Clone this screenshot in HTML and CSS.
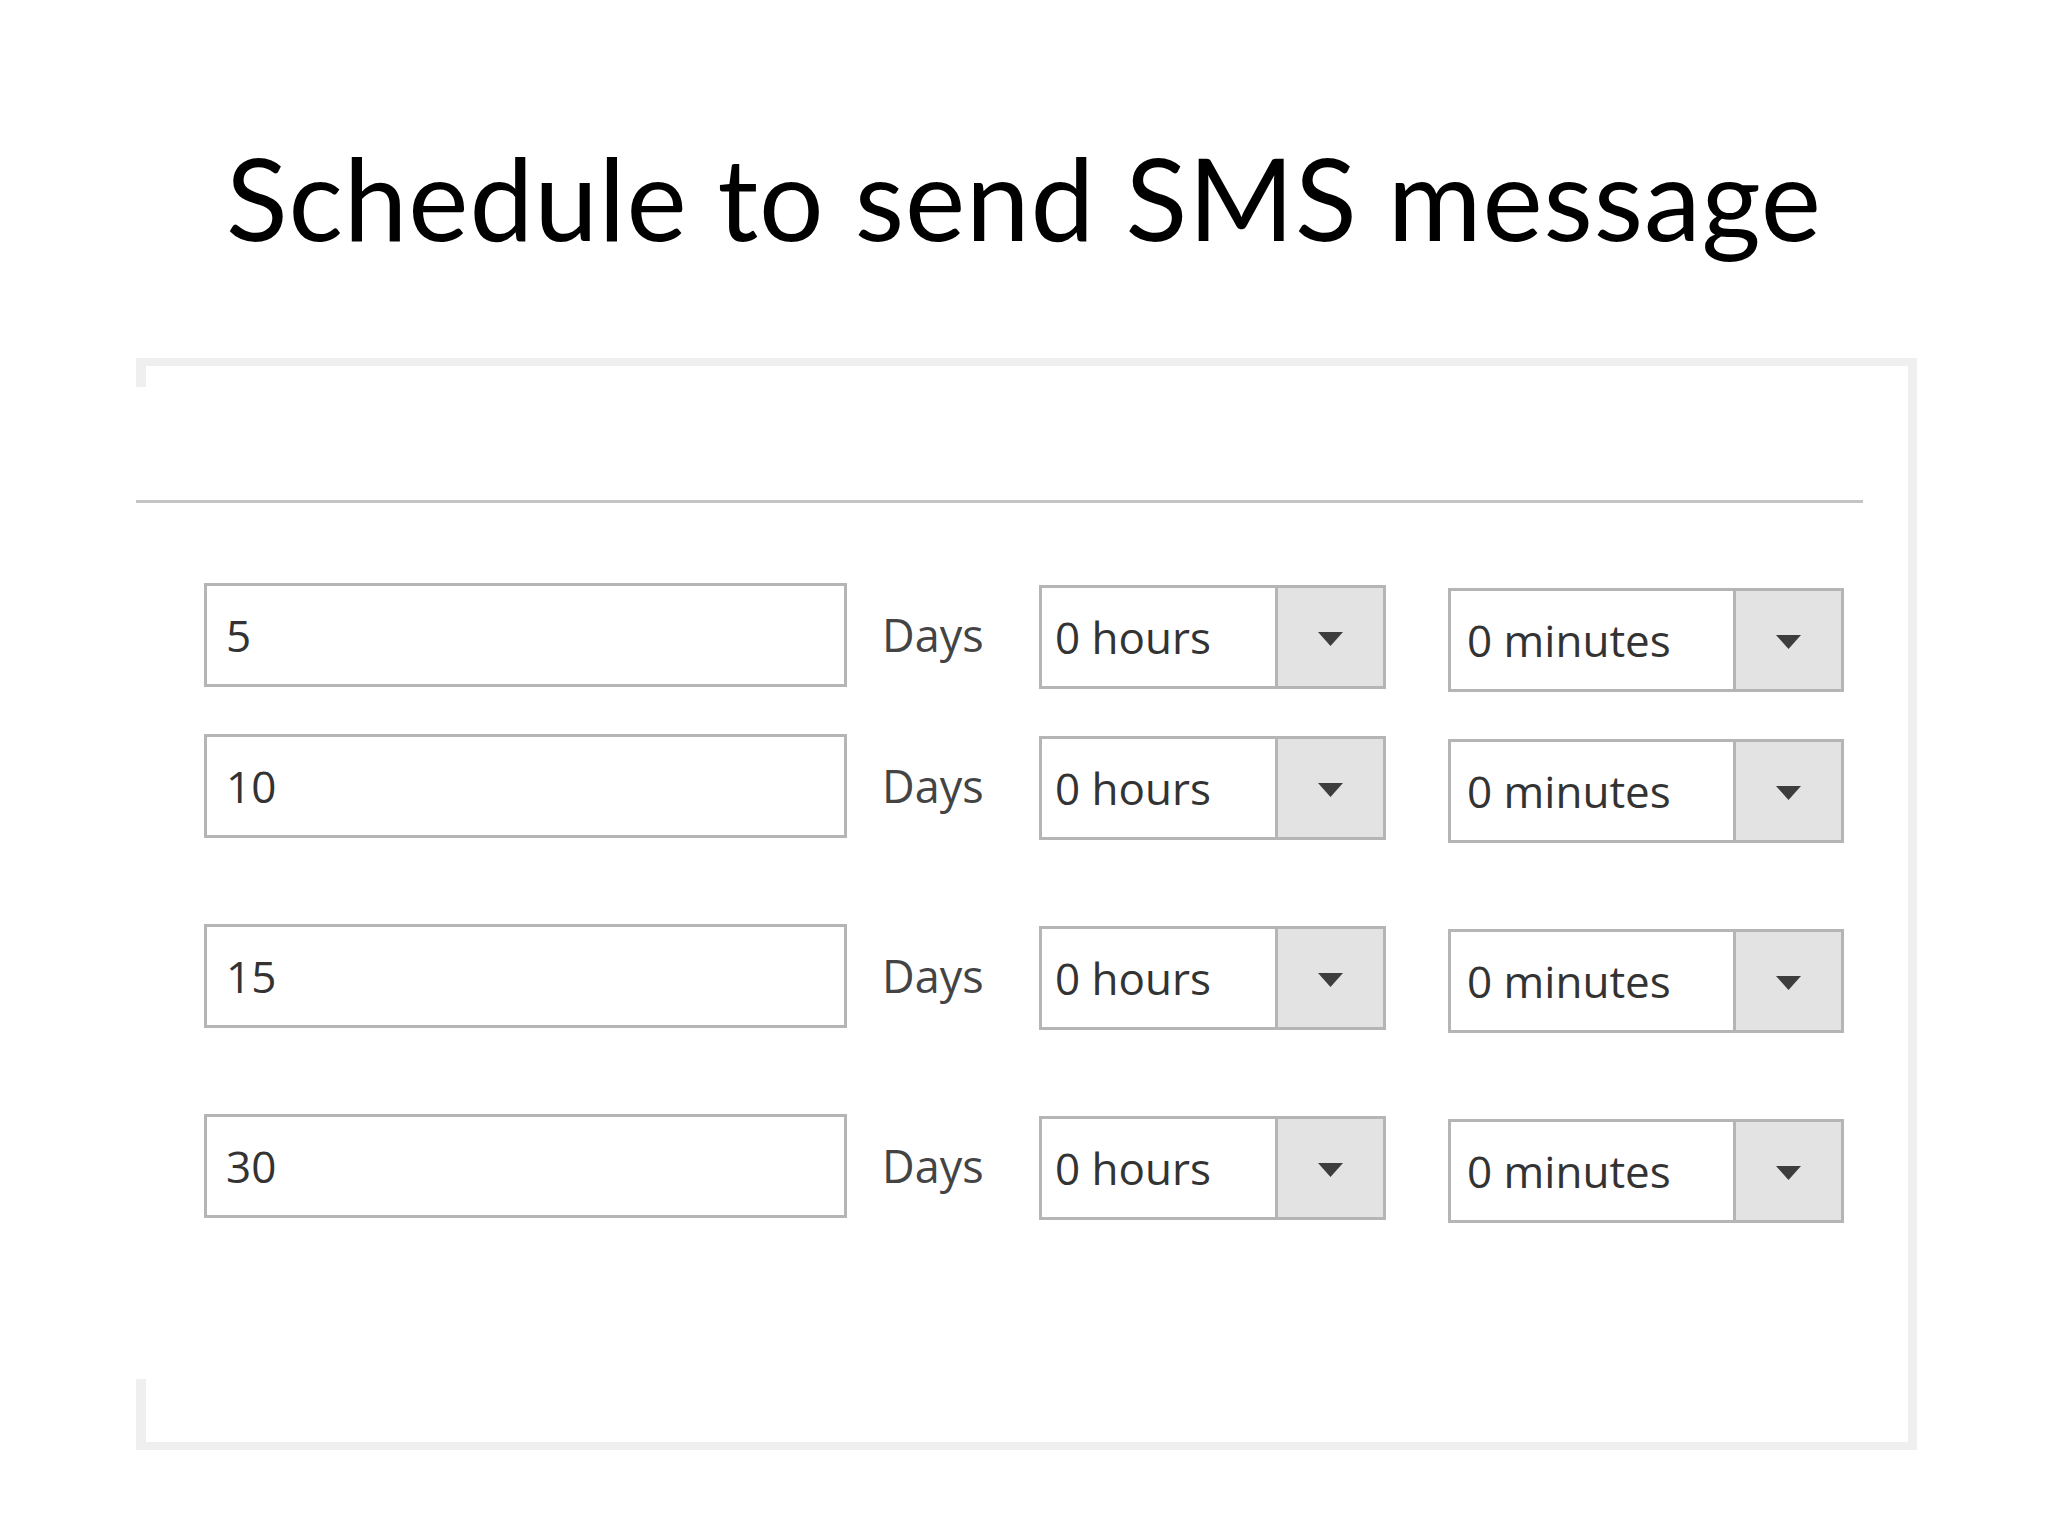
FILE: index.html
```html
<!DOCTYPE html>
<html lang="en">
<head>
  <meta charset="UTF-8">
  <meta name="viewport" content="width=device-width, initial-scale=1.0">
  <title>Schedule to send SMS message</title>
  <link rel="stylesheet" href="styles.css">
</head>
<body>
  <h1 class="title">Schedule to send SMS message</h1>

  <div class="panel">
    <div class="panel-header"></div>

    <div class="schedule">
      <!-- Reminder 1 -->
      <div class="row">
        <div class="days-input">5</div>
        <div class="days-label">Days</div>
        <div class="select select-hours">
          <span class="select-value">0 hours</span>
          <span class="select-toggle">
            <svg class="arrow" width="25" height="14" viewBox="0 0 25 14"><polygon points="0,0 25,0 12.5,14"/></svg>
          </span>
        </div>
        <div class="select select-minutes">
          <span class="select-value">0 minutes</span>
          <span class="select-toggle">
            <svg class="arrow" width="25" height="14" viewBox="0 0 25 14"><polygon points="0,0 25,0 12.5,14"/></svg>
          </span>
        </div>
      </div>

      <!-- Reminder 2 -->
      <div class="row row-tight">
        <div class="days-input">10</div>
        <div class="days-label">Days</div>
        <div class="select select-hours">
          <span class="select-value">0 hours</span>
          <span class="select-toggle">
            <svg class="arrow" width="25" height="14" viewBox="0 0 25 14"><polygon points="0,0 25,0 12.5,14"/></svg>
          </span>
        </div>
        <div class="select select-minutes">
          <span class="select-value">0 minutes</span>
          <span class="select-toggle">
            <svg class="arrow" width="25" height="14" viewBox="0 0 25 14"><polygon points="0,0 25,0 12.5,14"/></svg>
          </span>
        </div>
      </div>

      <!-- Reminder 3 -->
      <div class="row">
        <div class="days-input">15</div>
        <div class="days-label">Days</div>
        <div class="select select-hours">
          <span class="select-value">0 hours</span>
          <span class="select-toggle">
            <svg class="arrow" width="25" height="14" viewBox="0 0 25 14"><polygon points="0,0 25,0 12.5,14"/></svg>
          </span>
        </div>
        <div class="select select-minutes">
          <span class="select-value">0 minutes</span>
          <span class="select-toggle">
            <svg class="arrow" width="25" height="14" viewBox="0 0 25 14"><polygon points="0,0 25,0 12.5,14"/></svg>
          </span>
        </div>
      </div>

      <!-- Reminder 4 -->
      <div class="row">
        <div class="days-input">30</div>
        <div class="days-label">Days</div>
        <div class="select select-hours">
          <span class="select-value">0 hours</span>
          <span class="select-toggle">
            <svg class="arrow" width="25" height="14" viewBox="0 0 25 14"><polygon points="0,0 25,0 12.5,14"/></svg>
          </span>
        </div>
        <div class="select select-minutes">
          <span class="select-value">0 minutes</span>
          <span class="select-toggle">
            <svg class="arrow" width="25" height="14" viewBox="0 0 25 14"><polygon points="0,0 25,0 12.5,14"/></svg>
          </span>
        </div>
      </div>
    </div>
  </div>
</body>
</html>
```

FILE: styles.css
```css
* {
  margin: 0;
  padding: 0;
  box-sizing: border-box;
}

body {
  width: 2048px;
  min-height: 1536px;
  background: #fff;
  font-family: 'Open Sans', 'Noto Sans', sans-serif;
  color: #333;
}

.title {
  padding-top: 140px;
  font-family: Lato, 'Liberation Sans', sans-serif;
  font-weight: 400;
  font-size: 114px;
  line-height: 114px;
  letter-spacing: 0.9px;
  text-align: center;
  color: #000;
}

/* card, left edge only shows at the corners */
.panel {
  width: 1781px;
  height: 1092px;
  margin: 104px 0 0 136px;
  border: 8px solid #efefef;
  border-left: 0;
  border-right-width: 9px;
  background:
    linear-gradient(#efefef, #efefef) left top / 10px 21px no-repeat,
    linear-gradient(#efefef, #efefef) left bottom / 10px 63px no-repeat,
    #fff;
}

.panel-header {
  width: 1727px;
  height: 137px;
  border-bottom: 3px solid #c4c4c4;
}

.schedule {
  padding: 80px 0 0 68px;
}

.row {
  display: flex;
  align-items: flex-start;
  height: 104px;
}

.row + .row {
  margin-top: 86px;
}

.row.row-tight {
  margin-top: 47px;
}

.days-input {
  width: 643px;
  height: 104px;
  padding-left: 19px;
  border: 3px solid #b5b5b5;
  background: #fff;
  font-size: 44px;
  line-height: 98px;
}

.days-label {
  width: 192px;
  padding-left: 35px;
  font-size: 45px;
  line-height: 104px;
  color: #444;
}

.select {
  display: flex;
  height: 104px;
  border: 3px solid #b5b5b5;
  background: #fff;
}

.select-hours {
  width: 347px;
  margin-top: 2px;
}

.select-minutes {
  width: 396px;
  margin-top: 5px;
  margin-left: 62px;
}

.select-value {
  flex: 1;
  padding-left: 13px;
  font-size: 44px;
  line-height: 98px;
  white-space: nowrap;
}

.select-minutes .select-value {
  padding-left: 16px;
}

.select-toggle {
  display: flex;
  align-items: center;
  justify-content: center;
  width: 108px;
  border-left: 3px solid #b5b5b5;
  background: #e3e3e3;
}

.arrow {
  margin-top: 4px;
  fill: #3d3d3d;
}
```
